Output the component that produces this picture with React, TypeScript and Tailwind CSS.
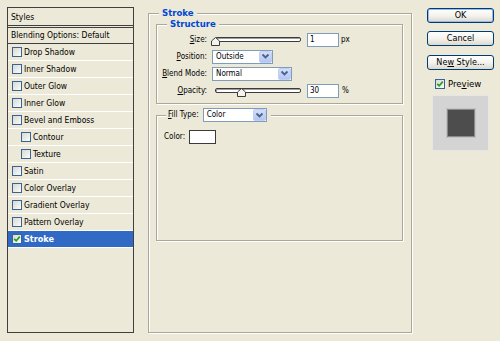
import React from "react";

const F = "font-['DejaVu_Sans_Condensed','DejaVu_Sans',sans-serif]";

function Check({ checked }: { checked?: boolean }) {
  return (
    <span className="w-[10px] h-[10px] shrink-0 border border-[#3a6294] bg-linear-to-br from-[#d9d9d2] to-[#fbfbf8] flex items-center justify-center">
      {checked && (
        <svg width="8" height="8" viewBox="0 0 8 8">
          <path d="M1.2 3.8 L3.2 5.8 L6.8 1.6" stroke="#21a121" strokeWidth="1.7" fill="none" />
        </svg>
      )}
    </span>
  );
}

function Row({ label, indent, checked, selected }: { label: string; indent?: boolean; checked?: boolean; selected?: boolean }) {
  return (
    <div
      className={
        "h-[17px] border-b border-white flex items-center gap-[2px] " +
        (indent ? "pl-[13px] " : "pl-[4px] ") +
        (selected ? "bg-[#316AC5] text-white font-bold text-[9px]" : "text-black text-[8.5px]")
      }
    >
      <Check checked={checked} />
      <span className="leading-[16px] whitespace-nowrap">{label}</span>
    </div>
  );
}

function Chevron() {
  return (
    <span className="w-[13px] h-[12px] mr-[0px] rounded-[2px] bg-linear-to-b from-[#d3defa] to-[#b2c6f4] border border-[#c0cff2] flex items-center justify-center">
      <svg width="9" height="7" viewBox="0 0 9 7">
        <path d="M1.5 1.5 L4.5 4.5 L7.5 1.5" stroke="#4d6185" strokeWidth="1.8" fill="none" />
      </svg>
    </span>
  );
}

function Select({ value, w }: { value: string; w: string }) {
  return (
    <div className={"h-[14px] border border-[#7F9DB9] bg-white flex items-center justify-between pl-[3px] text-[8px] " + w}>
      <span className="leading-[12px]">{value}</span>
      <Chevron />
    </div>
  );
}

function Slider({ pos }: { pos: number }) {
  return (
    <div className="relative ml-[8px] w-[86px] h-[5px] rounded-[2px] border border-[#3c3c3c] bg-white shadow-[inset_1px_1px_0_#9d9d9d]">
      <svg className="absolute top-[-1px]" style={{ left: pos }} width="9" height="9" viewBox="0 0 9 9">
        <path d="M0.5 4 L4.5 0.5 L8.5 4 L8.5 8.5 L0.5 8.5 Z" fill="#F4F3EE" stroke="#3c3c3c" strokeWidth="1" />
      </svg>
    </div>
  );
}

function Input({ value }: { value: string }) {
  return (
    <div className="ml-[6px] w-[32px] h-[14px] border border-[#7F9DB9] bg-white pl-[2px] text-[8px] leading-[12px]">{value}</div>
  );
}

function Label({ a, rest }: { a: string; rest: string }) {
  return (
    <div className="w-[50px] text-right text-[8px] whitespace-nowrap">
      <span className="underline underline-offset-1">{a}</span>
      {rest}
    </div>
  );
}

function Btn({ children, def }: { children: React.ReactNode; def?: boolean }) {
  return (
    <div
      className={
        "w-[67px] h-[15px] rounded-[3px] border border-[#003C74] bg-linear-to-b from-white via-[#f4f3ee] to-[#dcd8cc] flex items-center justify-center text-[9px] leading-[13px] " +
        (def ? "shadow-[inset_0_0_0_1px_#9cb9ec]" : "")
      }
    >
      {children}
    </div>
  );
}

export default function App() {
  const etched = "border border-[#aca899] shadow-[inset_1px_1px_0_#fff,1px_1px_0_#fff]";
  return (
    <div className={"w-[500px] h-[341px] bg-[#ECE9D8] flex pt-[7px] pl-[7px] text-black " + F}>
      {/* Styles list */}
      <div className="w-[127px] h-[326px] border border-[#404040] flex flex-col">
        <div className="h-[20px] border-b-[3px] border-double border-[#404040] pl-[3px] text-[8.5px] leading-[16px] flex items-center">
          Styles
        </div>
        <div className="h-[16px] border-b border-[#404040] pl-[3px] text-[8.5px] flex items-center whitespace-nowrap">
          Blending Options: Default
        </div>
        <Row label="Drop Shadow" />
        <Row label="Inner Shadow" />
        <Row label="Outer Glow" />
        <Row label="Inner Glow" />
        <Row label="Bevel and Emboss" />
        <Row label="Contour" indent />
        <Row label="Texture" indent />
        <Row label="Satin" />
        <Row label="Color Overlay" />
        <Row label="Gradient Overlay" />
        <Row label="Pattern Overlay" />
        <Row label="Stroke" checked selected />
      </div>

      {/* Stroke group */}
      <div className={"relative mt-[6px] ml-[14px] w-[264px] h-[320px] pt-[10px] pl-[7px] " + etched}>
        <span className="absolute top-[-7px] left-[10px] bg-[#ECE9D8] px-[3px] text-[9.5px] leading-[12px] font-bold text-[#0046D5]">
          Stroke
        </span>

        {/* Structure */}
        <div className={"relative w-[247px] h-[80px] pt-[6px] " + etched}>
          <span className="absolute top-[-7px] left-[10px] bg-[#ECE9D8] px-[3px] text-[9.5px] leading-[12px] font-bold text-[#0046D5]">
            Structure
          </span>
          <div className="h-[17px] flex items-center">
            <Label a="S" rest="ize:" />
            <Slider pos={-5} />
            <Input value="1" />
            <span className="ml-[2px] text-[8px]">px</span>
          </div>
          <div className="h-[17px] flex items-center">
            <Label a="P" rest="osition:" />
            <div className="ml-[5px]">
              <Select value="Outside" w="w-[61px]" />
            </div>
          </div>
          <div className="h-[17px] flex items-center">
            <Label a="B" rest="lend Mode:" />
            <div className="ml-[5px]">
              <Select value="Normal" w="w-[80px]" />
            </div>
          </div>
          <div className="h-[17px] flex items-center">
            <Label a="O" rest="pacity:" />
            <Slider pos={21} />
            <Input value="30" />
            <span className="ml-[3px] text-[8px]">%</span>
          </div>
        </div>

        {/* Fill Type */}
        <div className={"relative mt-[11px] w-[247px] h-[126px] pt-[14px] pl-[7px] " + etched}>
          <div className="absolute top-[-8px] left-[9px] h-[14px] bg-[#ECE9D8] pl-[2px] pr-[4px] flex items-center">
            <span className="text-[8px] whitespace-nowrap">
              <span className="underline underline-offset-1">F</span>ill Type:
            </span>
            <div className="ml-[4px]">
              <Select value="Color" w="w-[64px]" />
            </div>
          </div>
          <div className="h-[14px] flex items-center">
            <span className="w-[25px] text-[8px]">Color:</span>
            <div className="w-[27px] h-[14px] border border-[#3a3a3a] bg-white" />
          </div>
        </div>
      </div>

      {/* Buttons */}
      <div className="ml-[15px] mt-[1px] w-[67px] flex flex-col">
        <Btn def>OK</Btn>
        <div className="mt-[8px]">
          <Btn>Cancel</Btn>
        </div>
        <div className="mt-[9px]">
          <Btn>
            Ne<span className="underline underline-offset-1">w</span>&nbsp;Style...
          </Btn>
        </div>
        <div className="mt-[8px] pl-[8px] h-[11px] flex items-center gap-[3px]">
          <Check checked />
          <span className="text-[9.5px] leading-[11px]">
            Pre<span className="underline underline-offset-1">v</span>iew
          </span>
        </div>
        <div className="mt-[6px] ml-[5px] w-[57px] h-[56px] bg-[#d4d4d4] border border-[#e6e6e6] flex items-center justify-center">
          <div className="w-[28px] h-[28px] border border-[#8a8a8a] bg-[#4d4d4d] shadow-[0_0_0_1px_#c4c4c4]" />
        </div>
      </div>
    </div>
  );
}
